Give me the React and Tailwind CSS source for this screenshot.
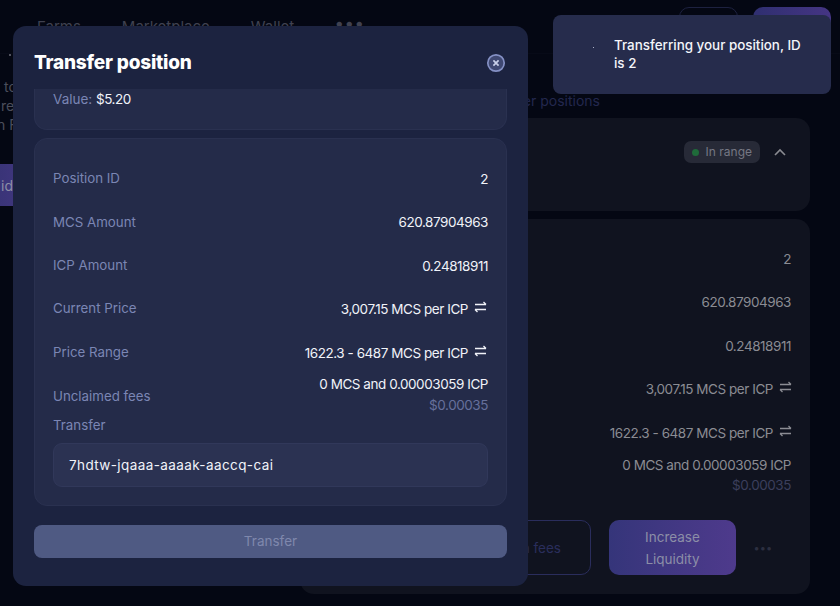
const font = { fontFamily: 'Inter, "Noto Sans", sans-serif' };

function Swap() {
  return (
    <svg width="13" height="12" viewBox="0 0 13 12" fill="none" stroke="currentColor" strokeWidth="1.3" className="-translate-y-[2px] -mr-[1px]">
      <path d="M1 3.5H12M9.5 1L12 3.5" />
      <path d="M12 8.5H1M3.5 11L1 8.5" />
    </svg>
  );
}

function BgRow({ value, swap, sub, h = "h-[43.4px]" }) {
  return (
    <div className={`flex flex-col justify-center items-end text-[13.5px] tracking-[-0.45px] text-[#8b8c93] ${h}`}>
      <div className="flex items-center gap-[6px]">
        <span>{value}</span>
        {swap && <Swap />}
      </div>
      {sub && <div className="leading-[21px] text-[#3b3f5c]">{sub}</div>}
    </div>
  );
}

function Row({ label, value, swap }) {
  return (
    <div className="flex items-center justify-between h-[43.4px]">
      <span className="text-[13.3px] text-[#7b86b4]">{label}</span>
      <span className={`flex items-center gap-[6px] text-[13.5px] tracking-[-0.45px] text-[#f1f3f9] ${swap ? "pr-[2px]" : ""}`}>
        {value}
        {swap && <Swap />}
      </span>
    </div>
  );
}

export default function App() {
  return (
    <div style={font} className="relative w-[840px] h-[606px] overflow-hidden bg-[#040713]">
      {/* Page behind the dialog */}
      <header className="flex items-start h-[54px] pl-[37px] pr-[9px] pt-[7px] border-b border-[#070a17]">
        <nav className="flex items-center gap-[41px] pt-[9px] text-[15px] text-[#3f4150]">
          <span>Farms</span>
          <span>Marketplace</span>
          <span>Wallet</span>
          <span className="tracking-[2px] text-[17px] font-bold leading-none -translate-y-[4px]">•••</span>
        </nav>
        <div className="ml-auto flex gap-[15px]">
          <div className="w-[59px] h-[34px] rounded-[10px] border border-[#1d2140]" />
          <div className="w-[78px] h-[34px] rounded-[10px] bg-gradient-to-r from-[#2f2f70] to-[#453584]" />
        </div>
      </header>
      <main className="flex h-[552px]">
        <aside className="relative w-[300px] shrink-0 text-[14px] leading-[19px] text-[#4c4e5b] pt-[23px]">
          <div className="absolute left-[9px] top-0 w-[2px] h-[2px] rounded-full bg-[#6b6d78]" />
          <div className="pl-[4px]">to</div>
          <div className="pl-[1px]">re</div>
          <div className="-ml-[3px]">n F</div>
          <div className="mt-[30px] w-[60px] h-[42px] rounded-r-[8px] bg-gradient-to-r from-[#3a3478] to-[#4b3a8a] text-[#8d8ea6] flex items-center pl-[1px]">
            id
          </div>
        </aside>
        <section className="w-[510px] pt-[36px]">
          <div className="text-right pr-[210px] h-[28px] text-[14px] text-[#23274e]">er positions</div>
          <div className="h-[93px] rounded-[14px] bg-[#10131f] flex items-start justify-end gap-[13px] pt-[23px] pr-[23px]">
            <span className="flex items-center gap-[7px] h-[22px] px-[8px] rounded-[7px] bg-[#272a37] text-[12px] text-[#767884]">
              <span className="w-[7px] h-[7px] rounded-full bg-[#1f6b3a]" />
              In range
            </span>
            <svg width="14" height="22" viewBox="0 0 14 22" fill="none" stroke="#8a8b91" strokeWidth="1.6"><path d="M2 14L7 9L12 14" /></svg>
          </div>
          <div className="mt-[8px] h-[375px] rounded-[14px] bg-[#10131f] pt-[18.5px] px-[19px]">
            <BgRow value="2" />
            <BgRow value="620.87904963" />
            <BgRow value="0.24818911" />
            <BgRow value="3,007.15 MCS per ICP" swap />
            <BgRow value="1622.3 - 6487 MCS per ICP" swap />
            <BgRow value="0 MCS and 0.00003059 ICP" sub="$0.00035" h="h-[42px]" />
            <div className="flex items-center justify-end gap-[18px] mt-[24px] pr-[1px]">
              <div className="w-[140px] h-[55px] rounded-[10px] border border-[#2a2d5c] flex items-center justify-end pr-[29px] text-[13.5px] text-[#2a2e5c]">n fees</div>
              <div className="w-[127px] h-[55px] rounded-[10px] bg-gradient-to-r from-[#35357a] to-[#4e3a8c] flex items-center justify-center text-center text-[13.5px] leading-[22px] text-[#8c8ea7]">
                Increase<br />Liquidity
              </div>
              <div className="w-[21px] mr-[15px] text-[#2c2f40] tracking-[1px] text-[11px] font-bold">•••</div>
            </div>
          </div>
        </section>
      </main>

      {/* Dialog */}
      <div className="absolute left-[13px] top-[26px] w-[515px] h-[560px] rounded-[13px] bg-[#1c2340] flex flex-col overflow-hidden">
        <div className="h-[63px] shrink-0 flex items-center justify-between pl-[21px] pr-[22px] pt-[11px]">
          <h2 className="text-[19px] font-extrabold text-white tracking-[-0.2px]">Transfer position</h2>
          <svg width="20" height="20" viewBox="0 0 20 20" fill="none">
            <circle cx="10" cy="10" r="8.2" fill="#3f4872" stroke="#8490c4" strokeWidth="1.7" />
            <path d="M7.4 7.4L12.6 12.6M12.6 7.4L7.4 12.6" stroke="#c9cfe9" strokeWidth="1.7" />
          </svg>
        </div>
        <div className="flex-1 px-[21px]">
          <div className="h-[41px] rounded-b-[13px] bg-[#242b49] border border-t-0 border-[#2a3150] pl-[18px] text-[13.5px]">
            <span className="text-[#7b86b4]">Value: </span>
            <span className="text-[#f1f3f9] tracking-[-0.5px]">$5.20</span>
          </div>
          <div className="mt-[8px] h-[368px] rounded-[13px] bg-[#242b49] border border-[#2a3150] px-[18px] pt-[18.5px]">
            <Row label="Position ID" value="2" />
            <Row label="MCS Amount" value="620.87904963" />
            <Row label="ICP Amount" value="0.24818911" />
            <Row label="Current Price" value="3,007.15 MCS per ICP" swap />
            <Row label="Price Range" value="1622.3 - 6487 MCS per ICP" swap />
            <div className="flex items-center justify-between h-[42px]">
              <span className="text-[13.3px] text-[#7b86b4] pt-[3px]">Unclaimed fees</span>
              <span className="flex flex-col items-end text-[13.5px] tracking-[-0.45px] text-[#f1f3f9] leading-[21px]">
                <span>0 MCS and 0.00003059 ICP</span>
                <span className="text-[#66709c]">$0.00035</span>
              </span>
            </div>
            <div className="text-[13.3px] text-[#7b86b4] -mt-[1.5px] leading-[20px]">Transfer</div>
            <div className="mt-[8px] h-[44px] rounded-[9px] bg-[#2b3252] border border-[#31385a] flex items-center pl-[15px] text-[13.5px] tracking-[0.4px] text-[#f1f3f9]">
              7hdtw-jqaaa-aaaak-aaccq-cai
            </div>
          </div>
          <button className="mt-[19px] w-full h-[33px] rounded-[8px] bg-[#4f5a83] text-[13.5px] text-[#7f88ad]">Transfer</button>
        </div>
      </div>

      {/* Toast */}
      <div className="absolute left-[553px] top-[15px] w-[278px] h-[79px] rounded-[8px] bg-[#262c4c] flex items-start pt-[21px] pl-[61px] pr-[20px]">
        <span className="text-[13.4px] leading-[18px] font-medium text-[#f4f5fa]">Transferring your position, ID is 2</span>
        <span className="absolute left-[40px] top-[32px] w-px h-px bg-[#aab0c8]" />
      </div>
    </div>
  );
}
